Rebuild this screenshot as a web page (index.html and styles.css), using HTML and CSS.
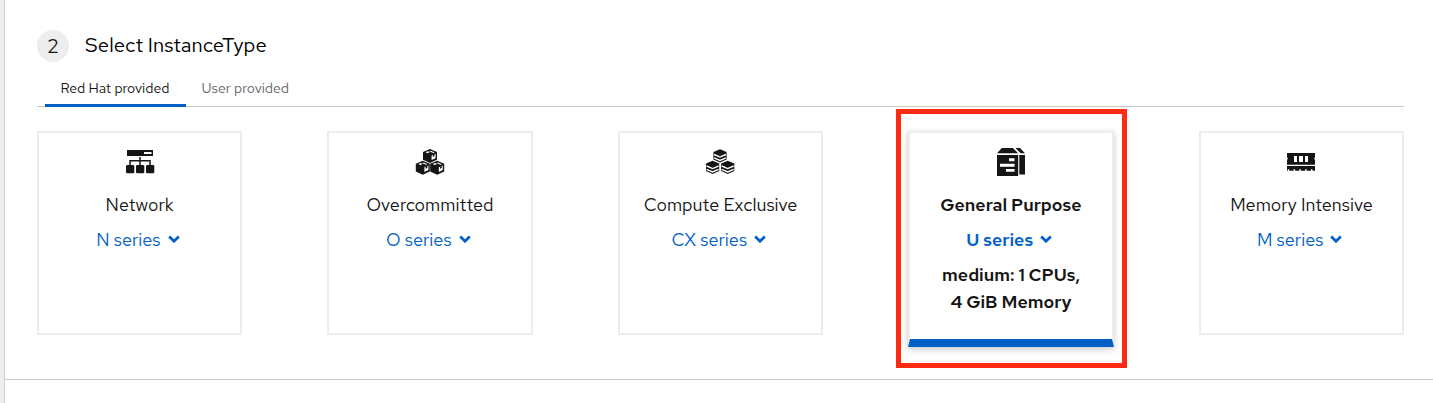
FILE: index.html
```html
<!DOCTYPE html>
<html lang="en">
<head>
<meta charset="utf-8">
<title>Select InstanceType</title>
<link rel="stylesheet" href="styles.css">
</head>
<body>
<main class="page">
  <section class="step">
    <header class="step-header"><span class="step-number">2</span><h2 class="step-title">Select InstanceType</h2></header>
    <nav class="tabs"><a class="tab tab-active">Red Hat provided</a><a class="tab">User provided</a></nav>
    <div class="cards">
      <article class="card">
        <svg class="icon" viewBox="14 7 32 30"><path d="M17 10h26v6H17z"/><path fill="#fff" d="M34 12h7.5v2H34z"/><path fill="none" stroke="#151515" stroke-width="1.5" d="M30 17v8M20 26v-5.3h20V26"/><rect x="16" y="25" width="8.300" height="8.300" rx="1.300"/><rect x="26" y="25" width="8.300" height="8.300" rx="1.300"/><rect x="36" y="25" width="8.300" height="8.300" rx="1.300"/></svg>
        <div class="name">Network</div>
        <div class="series"><span>N series</span><svg class="caret" viewBox="0 0 12 8"><path d="M1.200 1.600 6 6.200l4.800-4.600"/></svg></div>
      </article>
      <article class="card">
        <svg class="icon" viewBox="14 7 32 30"><defs><g id="box"><path d="M0-7 7-4v7.700L0 7l-7-3.300V-4z"/><path fill="#fff" d="m-4.500-3.700 2.400-1 2.100.8-2.400 1.100zM.8-5.200l3.900 1.600-1.300.6-3.900-1.600zM1.600-.5l4-1.800v4.500l-4 1.900z"/><path d="m2.800-1.400 1.700-.8v2.300l-1.700.8z"/></g></defs><use href="#box" x="30" y="16"/><use href="#box" x="22.800" y="27.800"/><use href="#box" x="37.200" y="27.800"/></svg>
        <div class="name">Overcommitted</div>
        <div class="series"><span>O series</span><svg class="caret" viewBox="0 0 12 8"><path d="M1.200 1.600 6 6.200l4.800-4.600"/></svg></div>
      </article>
      <article class="card">
        <svg class="icon" viewBox="15 7 32 30"><defs><g id="stack"><path d="M0-6.800 6.600-4v7.400L0 6.500l-6.600-3.100V-4z"/><path fill="none" stroke="#fff" stroke-width="1.400" d="m-6-1.500 6 2.600 6-2.600M-6 1.800l6 2.600 6-2.600"/></g></defs><use href="#stack" x="30" y="16"/><use href="#stack" x="22.600" y="27.500"/><use href="#stack" x="37.700" y="27.500"/></svg>
        <div class="name">Compute Exclusive</div>
        <div class="series"><span>CX series</span><svg class="caret" viewBox="0 0 12 8"><path d="M1.200 1.600 6 6.200l4.800-4.600"/></svg></div>
      </article>
      <article class="card card-selected">
        <svg class="icon" viewBox="15 7 32 30"><path d="M17 15h21.200v21H17zM17 13.300 21.800 8h11l5.400 5.300zM35.500 8H40l5 5.300h-4.300zM39.300 15H45v19.500h-5.700z"/><path fill="#fff" d="M29 18.300h5.500v3H29zM20 23.700h14.500v3H20zM26 29h8.500v2.800H26z"/></svg>
        <div class="name">General Purpose</div>
        <div class="series"><span>U series</span><svg class="caret" viewBox="0 0 12 8"><path d="M1.200 1.600 6 6.200l4.800-4.600"/></svg></div>
        <div class="size">medium: 1 CPUs,<br>4 GiB Memory</div>
      </article>
      <article class="card">
        <svg class="icon" viewBox="15 7 32 30"><path d="M17 13h28v4q-1.600 1.600 0 3.200v4.600H17v-4.600q1.600-1.600 0-3.200z"/><path fill="#fff" d="M24 16h3v6h-3zM29 16h4v6h-4zM35 16h3v6h-3z"/><path d="M17 26h28v4.800h-2.500v-1.500h-1.500v1.500h-4.300v-1.500h-1.500v1.500h-4.300v-1.500h-1.500v1.500h-4.300v-1.500h-1.500v1.500h-4.300v-1.500h-1.500v1.500H17z"/></svg>
        <div class="name">Memory Intensive</div>
        <div class="series"><span>M series</span><svg class="caret" viewBox="0 0 12 8"><path d="M1.200 1.600 6 6.200l4.800-4.600"/></svg></div>
      </article>
    </div>
  </section>
  <div class="highlight"></div>
</main>
</body>
</html>
```
FILE: styles.css
```css
* { box-sizing: border-box; }
body { margin: 0; background: #fff; color: #151515; font-family: "Red Hat Text", Inter, sans-serif; }
.page { position: relative; height: 403px; overflow: hidden; border-left: 4px solid #ededed; box-shadow: inset 1px 0 #d2d2d2; }
.step { height: 380px; margin-left: 1px; padding: 29px 29px 0 32px; border-bottom: 1px solid #c7c7c7; }
.step-header { display: flex; align-items: center; gap: 16px; height: 33px; }
.step-number { width: 32px; height: 32px; border-radius: 50%; background: #ededed; text-align: center; font-size: 20px; line-height: 32px; }
.step-title { margin: 0; color: #000; font-size: 20.300px; font-weight: 400; line-height: 30px; padding-bottom: 2px; }
.tabs { display: flex; margin-top: 9px; height: 36px; padding-left: 8px; border-bottom: 1px solid #c7c7c7; }
.tab { height: 36px; padding: 0 15.500px; color: #63676c; font-size: 14.050px; line-height: 35px; white-space: nowrap; }
.tab-active { width: 141px; border-bottom: 3px solid #0060c8; color: #151515; }
.cards { display: flex; justify-content: space-between; align-items: flex-start; margin-top: 24px; }
.card { width: 205.200px; height: 204px; padding-top: 14px; border: 2px solid #ededed; text-align: center; font-size: 18px; white-space: nowrap; }
.card-selected { height: 216px; border-bottom: 8px solid #0060c8; box-shadow: 0 3px 7px rgba(3, 3, 3, .16), 0 0 4px rgba(3, 3, 3, .08); font-size: 17.800px; font-weight: 600; }
.icon { display: block; width: 32px; height: 30px; margin: 0 auto; fill: #151515; }
.name { margin-top: 14px; line-height: 27px; }
.series { display: flex; justify-content: center; align-items: center; gap: 7px; margin-top: 8px; padding-right: 3.500px; color: #0060c8; line-height: 27px; }
.caret { width: 12px; height: 8px; margin-top: -2px; fill: none; stroke: #0060c8; stroke-width: 2.800px; }
.size { margin-top: 8px; line-height: 27px; }
.highlight { position: absolute; left: 892px; top: 109px; width: 231px; height: 259px; border: 5px solid #ff2a12; }
```
